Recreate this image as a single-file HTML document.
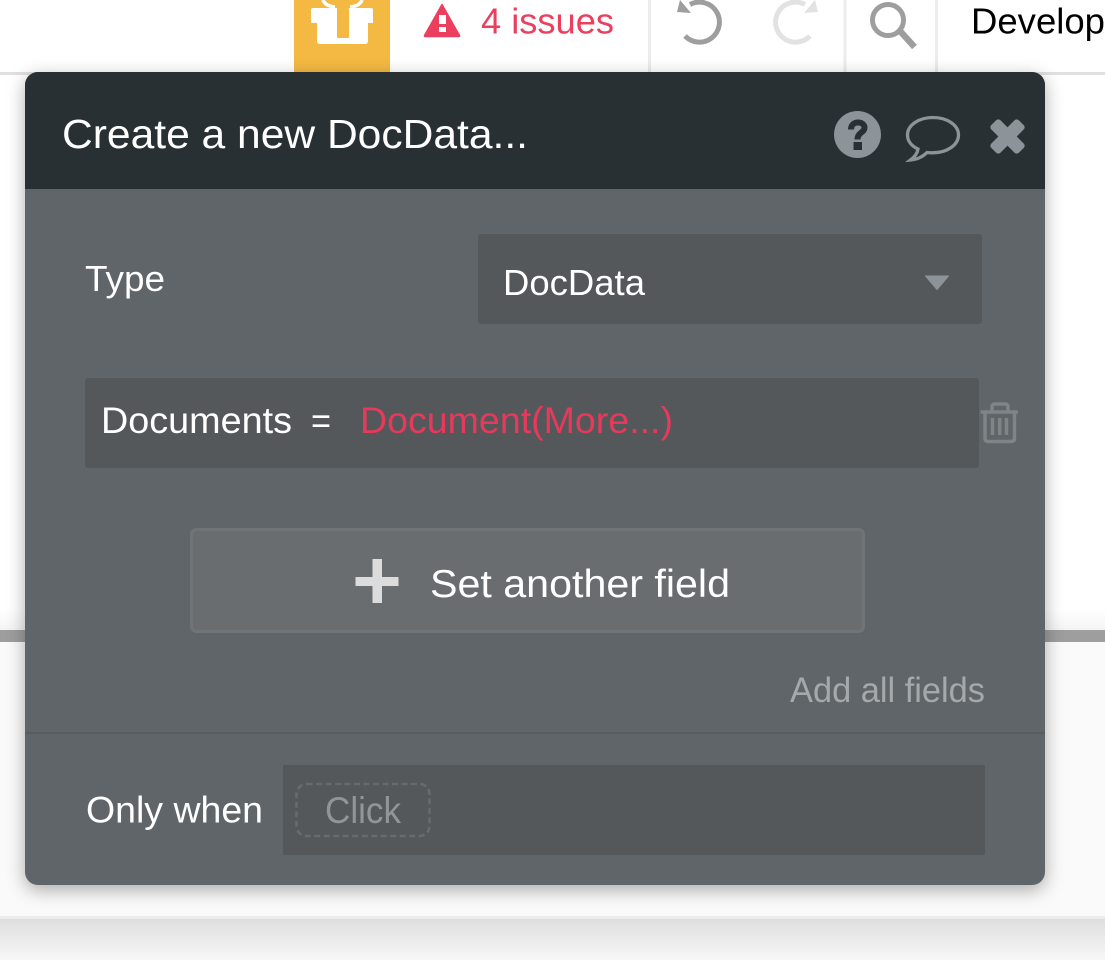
<!DOCTYPE html>
<html><head><meta charset="utf-8"><style>
html,body{margin:0;padding:0;width:1105px;height:960px;overflow:hidden;background:#fff}
svg{display:block;position:absolute;left:0;top:0}
text{font-family:"Liberation Sans",sans-serif}
</style></head><body>
<svg width="1105" height="960" viewBox="0 0 1105 960" xmlns="http://www.w3.org/2000/svg">
<defs>
<linearGradient id="g" x1="0" y1="0" x2="0" y2="1"><stop offset="0" stop-color="#dedede"/><stop offset="1" stop-color="#f7f7f7"/></linearGradient>
<linearGradient id="h" x1="0" y1="0" x2="0" y2="1"><stop offset="0" stop-color="#fff"/><stop offset="1" stop-color="#f4f4f4"/></linearGradient>
<filter id="s" x="-10%" y="-10%" width="120%" height="120%" color-interpolation-filters="sRGB"><feDropShadow dx="0" dy="5" stdDeviation="9" flood-color="#000" flood-opacity=".32"/></filter>
</defs>
<rect width="1105" height="960" fill="#fff"/>
<rect y="610" width="1105" height="20" fill="url(#h)"/>
<rect y="630" width="1105" height="12" fill="#9e9e9e"/>
<rect y="642" width="1105" height="274" fill="#fafafa"/>
<rect y="916" width="1105" height="3" fill="#ececec"/>
<rect y="919" width="1105" height="41" fill="url(#g)"/>
<rect y="72" width="1105" height="3" fill="#e0e0e0"/>
<rect x="648" width="3" height="72" fill="#ececec"/>
<rect x="843.500" width="3" height="72" fill="#ececec"/>
<rect x="935" width="3" height="72" fill="#ececec"/>

<rect x="294" width="96" height="72" fill="#f4b942"/>
<path d="M311 10Q311 8 313 8H371Q373 8 373 10V23H368V41Q368 44 365 44H320Q317 44 317 41V23H311Z" fill="#fff"/>
<path d="M323 0Q325 6 335 7M362 0Q360 6 350 7" stroke="#fff" stroke-width="3.500" fill="none"/>
<rect x="337" y="8" width="12" height="30" rx="1" fill="#f4b942"/>

<path d="M442 4.500L459.500 35.500Q460 36.500 458.500 36.500H425.500Q424 36.500 424.500 35.500Z" fill="#ec3f5f" stroke="#ec3f5f" stroke-width="1.500" stroke-linejoin="round"/>
<rect x="439" y="15" width="7" height="9" fill="#fff"/>
<rect x="439" y="27" width="7" height="5" fill="#fff"/>
<text x="481" y="33.500" font-size="36" fill="#ec3f5f" textLength="133" lengthAdjust="spacingAndGlyphs">4 issues</text>

<path d="M690 4.500A20 20 0 1 1 685 36" fill="none" stroke="#9e9e9e" stroke-width="5"/>
<path d="M677 12L680 0L691 13Z" fill="#9e9e9e"/>
<path d="M805 4.500A20 20 0 1 0 810 36" fill="none" stroke="#e2e2e2" stroke-width="5"/>
<path d="M818 12L815 0L804 13Z" fill="#e2e2e2"/>
<circle cx="888" cy="20" r="15.500" fill="none" stroke="#9e9e9e" stroke-width="5"/>
<path d="M900 31L914.500 47" stroke="#9e9e9e" stroke-width="6.500"/>
<text x="971" y="33.500" font-size="36" fill="#000" textLength="134" lengthAdjust="spacingAndGlyphs">Develop</text>

<rect x="25" y="72" width="1020" height="813" rx="13" fill="#5f6568" filter="url(#s)"/>
<path d="M25 189V85a13 13 0 0 1 13-13H1032a13 13 0 0 1 13 13V189Z" fill="#293033"/>
<text x="62" y="148" font-size="41" fill="#fff" textLength="466" lengthAdjust="spacingAndGlyphs">Create a new DocData...</text>

<circle cx="857.500" cy="134.500" r="23.500" fill="#8d9499"/>
<path d="M851 129.500C851 124.500 854.500 122.500 858 122.500C862 122.500 864.500 124.800 864.500 127.800C864.500 132.500 857.500 132.500 857.500 139.500" fill="none" stroke="#293033" stroke-width="6"/>
<rect x="853.500" y="142" width="8.500" height="8" fill="#293033"/>
<path d="M933 117.500C919 117.500 907.500 125 907.500 135C907.500 141 911.500 146 918 149C917.500 153 914.500 157 910.500 160C917 159.500 923 156.500 927 152.500C929 152.700 931 152.800 933 152.800C947 152.800 958.500 145 958.500 135C958.500 125 947 117.500 933 117.500Z" fill="none" stroke="#8d9499" stroke-width="3.300"/>
<rect x="988" y="130" width="39" height="13" rx="3" fill="#8d9499" transform="rotate(45 1007.500 136.500)"/>
<rect x="988" y="130" width="39" height="13" rx="3" fill="#8d9499" transform="rotate(-45 1007.500 136.500)"/>

<text x="85" y="291" font-size="36" fill="#fff" textLength="80" lengthAdjust="spacingAndGlyphs">Type</text>
<rect x="478" y="234" width="504" height="90" rx="3" fill="#54585b"/>
<text x="503" y="295" font-size="36" fill="#fff" textLength="142" lengthAdjust="spacingAndGlyphs">DocData</text>
<path d="M925.500 276H948.500L937 289.500Z" fill="#8d9499" stroke="#8d9499" stroke-width="1" stroke-linejoin="round"/>

<rect x="85" y="378" width="894" height="90" rx="3" fill="#54585b"/>
<text x="101" y="433" font-size="37" fill="#fff" textLength="191" lengthAdjust="spacingAndGlyphs">Documents</text>
<text x="311" y="433" font-size="36" fill="#fff" textLength="20" lengthAdjust="spacingAndGlyphs">=</text>
<text x="360" y="433" font-size="37" fill="#e7395b" textLength="313" lengthAdjust="spacingAndGlyphs">Document(More...)</text>

<path d="M980.500 412H1018M992 411V407Q992 404 995 404H1005Q1008 404 1008 407V411M985 412V438Q985 441.500 988.500 441.500H1011Q1014.500 441.500 1014.500 438V412M992.500 418V435M999.700 418V435M1006.500 418V435" fill="none" stroke="#7f8487" stroke-width="3.500"/>

<rect x="191.500" y="529.500" width="672" height="102" rx="5" fill="#696d70" stroke="#707477" stroke-width="3"/>
<path d="M355.500 577H398.500V586H355.500ZM372.500 559H382V603H372.500Z" fill="#dcdcdc"/>
<text x="430" y="597" font-size="39" fill="#fff" textLength="300" lengthAdjust="spacingAndGlyphs">Set another field</text>

<text x="790" y="702" font-size="35" fill="#a6a9ab" textLength="195" lengthAdjust="spacingAndGlyphs">Add all fields</text>
<rect x="25" y="732" width="1020" height="2" fill="#585c5f"/>

<text x="86" y="822.500" font-size="37" fill="#fff" textLength="177" lengthAdjust="spacingAndGlyphs">Only when</text>
<rect x="283" y="765" width="702" height="90" rx="2" fill="#54585b"/>
<rect x="296.500" y="784" width="133" height="52" rx="10" fill="none" stroke="#676b6e" stroke-width="2.500" stroke-dasharray="6 3.500"/>
<text x="325" y="823" font-size="37" fill="#929597" textLength="76" lengthAdjust="spacingAndGlyphs">Click</text>
</svg>
</body></html>
